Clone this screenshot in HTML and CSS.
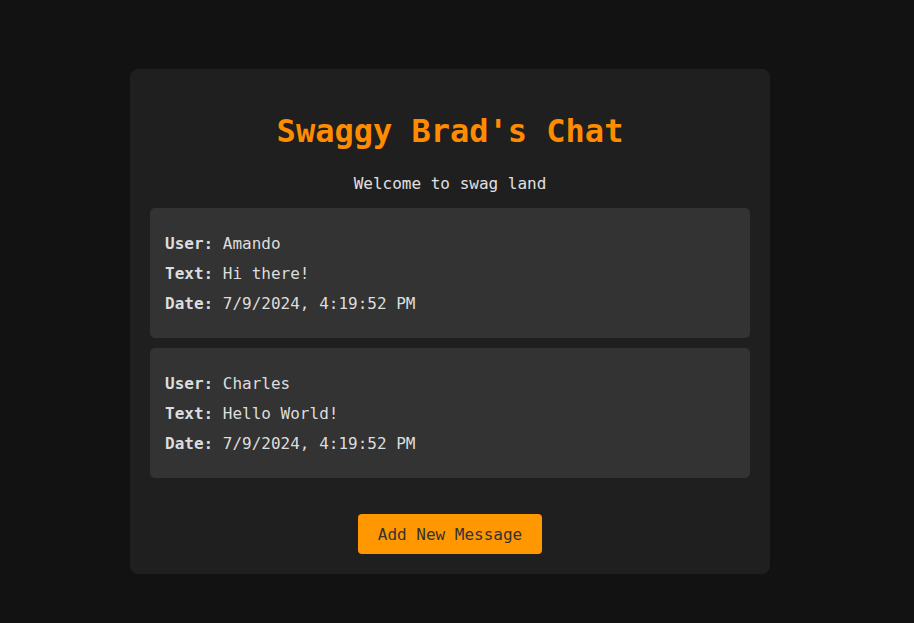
FILE: index.html
```html
<!DOCTYPE html>
<html lang="en">
<head>
<meta charset="utf-8">
<title>Swaggy Brad's Chat</title>
<link rel="stylesheet" href="styles.css">
</head>
<body>
  <main class="page">
    <section class="chat">
      <h1 class="chat-title">Swaggy Brad's Chat</h1>
      <p class="chat-subtitle">Welcome to swag land</p>
      <div class="messages">
        <article class="message">
          <p class="message-line"><strong>User:</strong> Amando</p>
          <p class="message-line"><strong>Text:</strong> Hi there!</p>
          <p class="message-line"><strong>Date:</strong> 7/9/2024, 4:19:52 PM</p>
        </article>
        <article class="message">
          <p class="message-line"><strong>User:</strong> Charles</p>
          <p class="message-line"><strong>Text:</strong> Hello World!</p>
          <p class="message-line"><strong>Date:</strong> 7/9/2024, 4:19:52 PM</p>
        </article>
      </div>
      <div class="actions">
        <button class="add-btn" type="button">Add New Message</button>
      </div>
    </section>
  </main>
</body>
</html>
```
FILE: styles.css
```css
html, body {
  margin: 0;
  padding: 0;
  background: #121212;
}

body {
  font-family: "DejaVu Sans Mono", "Liberation Mono", monospace;
  font-size: 16px;
  color: #e0e0e0;
}

.page {
  display: flex;
  justify-content: center;
  padding: 69px 14px 40px 0;
}

.chat {
  width: 600px;
  padding: 20px;
  background: #1f1f1f;
  border-radius: 8px;
}

.chat-title {
  margin: 23px 0 0;
  font-size: 32px;
  line-height: 38px;
  font-weight: bold;
  text-align: center;
  color: #ff8c00;
}

.chat-subtitle {
  margin: 24px 0 14px;
  line-height: 20px;
  text-align: center;
  color: #e0e0e0;
}

.messages {
  display: flex;
  flex-direction: column;
  gap: 10px;
}

.message {
  background: #333333;
  border-radius: 5px;
  padding: 16px 15px 14px;
}

.message-line {
  margin: 10px 0;
  line-height: 20px;
  color: #dddddd;
}

.message-line strong {
  font-weight: bold;
}

.actions {
  display: flex;
  justify-content: center;
  margin-top: 36px;
}

.add-btn {
  font-family: "DejaVu Sans Mono", "Liberation Mono", monospace;
  font-size: 16px;
  line-height: 20px;
  padding: 11px 20px 9px;
  border: none;
  border-radius: 4px;
  background: #ff9800;
  color: #333333;
  cursor: pointer;
}
```
